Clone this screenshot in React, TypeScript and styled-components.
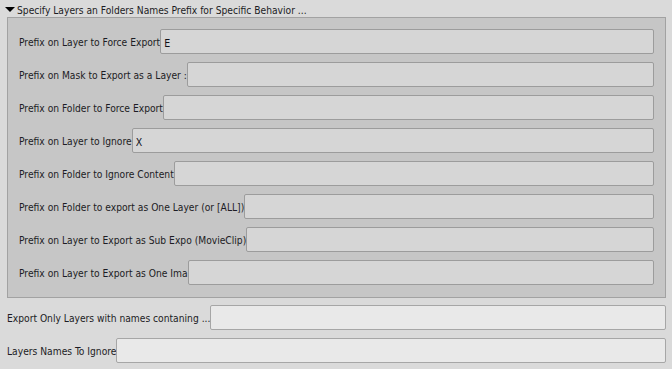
import React from 'react';
import styled, { createGlobalStyle } from 'styled-components';

const GlobalStyle = createGlobalStyle`
  html, body {
    margin: 0;
    padding: 0;
    background: #dadada;
  }
  body {
    font-family: "DejaVu Sans Condensed", "DejaVu Sans", sans-serif;
    font-size: 10.2px;
    color: #1c1c24;
  }
`;

const Panel = styled.div`
  width: 672px;
  height: 369px;
  overflow: hidden;
  background: #dadada;
`;

const SectionHeader = styled.div`
  display: flex;
  align-items: flex-start;
  height: 17px;
  padding-left: 5px;
  box-sizing: border-box;
`;

const Arrow = styled.span`
  width: 0;
  height: 0;
  margin-top: 7px;
  margin-right: 2px;
  border-left: 5px solid transparent;
  border-right: 5px solid transparent;
  border-top: 5px solid #000;
`;

const HeaderText = styled.span`
  padding-top: 5px;
  line-height: 12px;
  white-space: nowrap;
`;

const GroupBox = styled.div`
  margin: 0 6px 0 7px;
  padding: 11px 11px 12px 11px;
  background: #c6c6c6;
  border: 1px solid #a2a2a2;
  display: flex;
  flex-direction: column;
  gap: 8px;
`;

const Row = styled.div`
  display: flex;
  align-items: center;
  height: 25px;
`;

const BottomList = styled.div`
  display: flex;
  flex-direction: column;
  gap: 8px;
  padding: 7px 6px 0 7px;
`;

const Label = styled.span`
  white-space: nowrap;
  padding-top: 2px;
`;

const Field = styled.input<{ $light?: boolean }>`
  flex: 1;
  min-width: 0;
  height: 25px;
  box-sizing: border-box;
  margin: 0;
  padding: 2px 3px 0;
  font: inherit;
  font-size: 10.5px;
  line-height: 18px;
  color: #111118;
  background: ${(p) => (p.$light ? '#e9e9e9' : '#d6d6d6')};
  border: 1px solid ${(p) => (p.$light ? '#a6a6a6' : '#9c9c9c')};
  border-radius: 2px;
  outline: none;
`;

const prefixRows = [
  { label: 'Prefix on Layer to Force Export', value: 'E_' },
  { label: 'Prefix on Mask to Export as a Layer :', value: '' },
  { label: 'Prefix on Folder to Force Export', value: '' },
  { label: 'Prefix on Layer to Ignore', value: 'X_' },
  { label: 'Prefix on Folder to Ignore Content', value: '' },
  { label: 'Prefix on Folder to export as One Layer (or [ALL])', value: '' },
  { label: 'Prefix on Layer to Export as Sub Expo (MovieClip)', value: '' },
  { label: 'Prefix on Layer to Export as One Ima', value: '' },
];

const filterRows = [
  { label: 'Export Only Layers with names contaning ...', value: '' },
  { label: 'Layers Names To Ignore', value: '' },
];

const App: React.FC = () => {
  return (
    <Panel>
      <GlobalStyle />
      <SectionHeader>
        <Arrow />
        <HeaderText>Specify Layers an Folders Names Prefix for Specific Behavior ...</HeaderText>
      </SectionHeader>
      <GroupBox>
        {prefixRows.map((row) => (
          <Row key={row.label}>
            <Label>{row.label}</Label>
            <Field defaultValue={row.value} />
          </Row>
        ))}
      </GroupBox>
      <BottomList>
        {filterRows.map((row) => (
          <Row key={row.label}>
            <Label>{row.label}</Label>
            <Field $light defaultValue={row.value} />
          </Row>
        ))}
      </BottomList>
    </Panel>
  );
};

export default App;
